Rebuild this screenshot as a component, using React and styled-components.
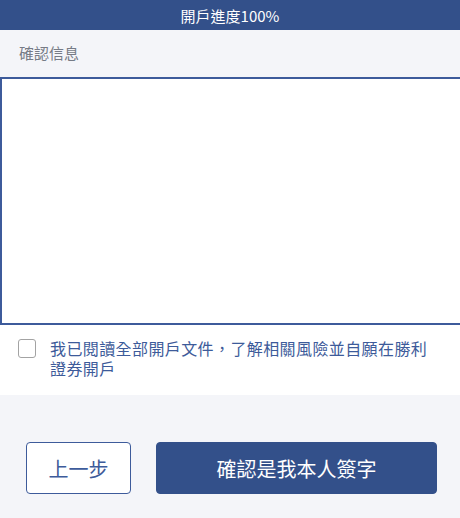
import React, { useState } from 'react'
import styled, { createGlobalStyle } from 'styled-components'

const GlobalStyle = createGlobalStyle`
  html, body {
    margin: 0;
    padding: 0;
    background: #f4f5f9;
    font-family: "Noto Sans CJK TC", "Noto Sans", sans-serif;
  }
`

const Page = styled.div`
  display: flex;
  flex-direction: column;
  width: 460px;
  height: 518px;
  overflow: hidden;
  background: #f4f5f9;
`

const Header = styled.div`
  height: 30px;
  display: flex;
  align-items: center;
  justify-content: center;
  background: #33508a;
  color: #fff;
  font-size: 15px;
  line-height: 1;
`

const SectionTitle = styled.div`
  height: 47px;
  display: flex;
  align-items: center;
  padding: 0 0 2px 19px;
  box-sizing: border-box;
  color: #767b86;
  font-size: 15px;
`

const SignPad = styled.div`
  height: 248px;
  box-sizing: border-box;
  background: #fff;
  border: 2px solid #3d5b9b;
  border-right: none;
`

const AgreeRow = styled.label`
  height: 70px;
  box-sizing: border-box;
  display: flex;
  align-items: flex-start;
  gap: 14px;
  padding: 13px 0 0 18px;
  background: #fff;
  cursor: pointer;
`

const Check = styled.span`
  flex: none;
  width: 18px;
  height: 19px;
  margin-top: 1px;
  box-sizing: border-box;
  border: 1.5px solid ${p => (p.$on ? '#33508a' : '#a3a3a3')};
  background: ${p => (p.$on ? '#33508a' : '#fff')};
  border-radius: 3px;
`

const AgreeText = styled.span`
  width: 385px;
  color: #3d5b9a;
  font-size: 16px;
  letter-spacing: 0.4px;
  line-height: 20px;
`

const Footer = styled.div`
  flex: 1;
  display: flex;
  gap: 25px;
  padding: 47px 23px 0 26px;
  background: #f4f5f9;
`

const Button = styled.button`
  height: 52px;
  box-sizing: border-box;
  border-radius: 4px;
  font-family: inherit;
  font-size: 20px;
  cursor: pointer;
  border: 1.5px solid #3d5b9b;
  background: ${p => (p.$primary ? '#33508a' : '#fff')};
  color: ${p => (p.$primary ? '#fff' : '#3d5b9a')};
  width: ${p => (p.$primary ? '281px' : '105px')};
  ${p => p.$primary && 'border-color: #33508a;'}
`

export default function App() {
  const [agree, setAgree] = useState(false)
  return (
    <Page>
      <GlobalStyle />
      <Header>開戶進度100%</Header>
      <SectionTitle>確認信息</SectionTitle>
      <SignPad />
      <AgreeRow onClick={() => setAgree(!agree)}>
        <Check $on={agree} />
        <AgreeText>我已閱讀全部開戶文件，了解相關風險並自願在勝利證券開戶</AgreeText>
      </AgreeRow>
      <Footer>
        <Button>上一步</Button>
        <Button $primary>確認是我本人簽字</Button>
      </Footer>
    </Page>
  )
}
